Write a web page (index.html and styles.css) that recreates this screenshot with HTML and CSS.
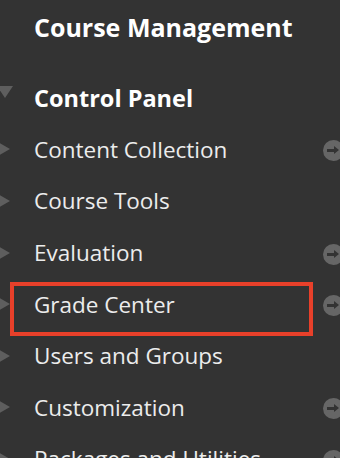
FILE: index.html
```html
<!DOCTYPE html>
<html>
<head>
	<link rel="stylesheet" href="styles.css">
</head>
<body>
	<div class="panel">
		<h2 class="panel-title">Course Management</h2>
		<ul class="menu">
			<li class="menu-item open"><span class="caret"></span><b>Control Panel</b></li>
			<li class="menu-item"><span class="caret"></span>Content Collection<span class="go"></span></li>
			<li class="menu-item"><span class="caret"></span>Course Tools</li>
			<li class="menu-item"><span class="caret"></span>Evaluation<span class="go"></span></li>
			<li class="menu-item marked"><span class="caret"></span>Grade Center<span class="go"></span></li>
			<li class="menu-item"><span class="caret"></span>Users and Groups</li>
			<li class="menu-item"><span class="caret"></span>Customization<span class="go"></span></li>
			<li class="menu-item"><span class="caret"></span>Packages and Utilities<span class="go"></span></li>
		</ul>
	</div>
</body>
</html>
```
FILE: styles.css
```css
body {
	margin: 0;
	background: #333333;
	font-family: "Open Sans", "DejaVu Sans", sans-serif;
	color: #ffffff;
	overflow: hidden;
}

.panel {
	height: 458px;
	box-sizing: border-box;
	overflow: hidden;
}

.panel-title {
	margin: 0;
	height: 72px;
	box-sizing: border-box;
	padding: 12px 0 0 34px;
	font-size: 25px;
	line-height: 30px;
	font-weight: 700;
}

.menu {
	list-style: none;
	margin: 0;
	padding: 0;
}

.menu-item {
	position: relative;
	display: flex;
	align-items: center;
	height: 51.6px;
	padding-left: 34px;
	font-size: 22.5px;
	color: #ececec;
	white-space: nowrap;
}

.menu-item b {
	font-size: 23.5px;
	color: #ffffff;
}

.caret {
	position: absolute;
	left: -2px;
	top: 50%;
	margin-top: -7px;
	width: 0;
	height: 0;
	border-top: 7px solid transparent;
	border-bottom: 7px solid transparent;
	border-left: 12px solid #5e5e5e;
}

.open .caret {
	left: -3px;
	margin-top: -12px;
	border-left: 8px solid transparent;
	border-right: 8px solid transparent;
	border-top: 12px solid #5e5e5e;
	border-bottom: 0;
}

.go {
	position: absolute;
	right: -4px;
	top: 50%;
	margin-top: -9px;
	width: 21px;
	height: 21px;
	border-radius: 50%;
	background: #666666;
}

.go::before {
	content: "";
	position: absolute;
	left: 4px;
	top: 9px;
	width: 9px;
	height: 3px;
	background: #333333;
}

.go::after {
	content: "";
	position: absolute;
	left: 11px;
	top: 6px;
	border-top: 4.5px solid transparent;
	border-bottom: 4.5px solid transparent;
	border-left: 5px solid #333333;
}

.marked::after {
	content: "";
	position: absolute;
	left: 10px;
	top: 4px;
	width: 295px;
	height: 46px;
	border: 4px solid #e8402a;
}
```
